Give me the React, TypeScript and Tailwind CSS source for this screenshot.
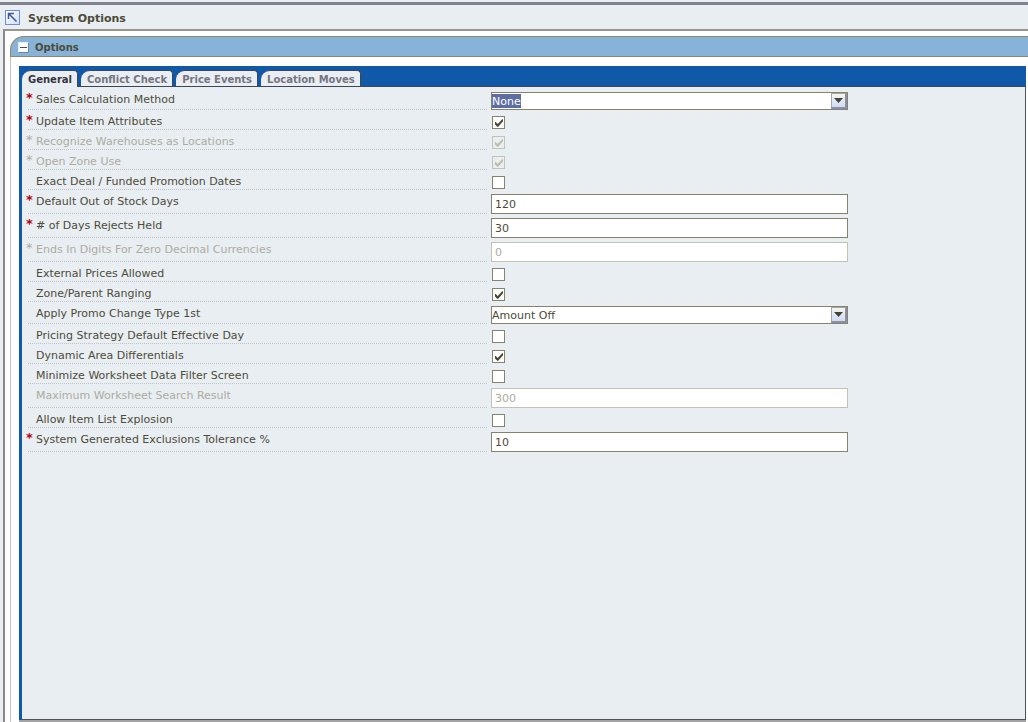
import React, { useState } from "react";

type Field = {
  id: string;
  label: string;
  kind: "select" | "check" | "text";
  value?: string;
  options?: string[];
  checked?: boolean;
  required?: boolean;
  disabled?: boolean;
  highlighted?: boolean;
};

const fields: Field[] = [
  { id: "sales-method", label: "Sales Calculation Method", kind: "select", value: "None", options: ["None"], required: true, highlighted: true },
  { id: "update-item", label: "Update Item Attributes", kind: "check", checked: true, required: true },
  { id: "warehouses", label: "Recognize Warehouses as Locations", kind: "check", checked: true, required: true, disabled: true },
  { id: "open-zone", label: "Open Zone Use", kind: "check", checked: true, required: true, disabled: true },
  { id: "exact-deal", label: "Exact Deal / Funded Promotion Dates", kind: "check" },
  { id: "out-of-stock", label: "Default Out of Stock Days", kind: "text", value: "120", required: true },
  { id: "rejects", label: "# of Days Rejects Held", kind: "text", value: "30", required: true },
  { id: "ends-in", label: "Ends In Digits For Zero Decimal Currencies", kind: "text", value: "0", required: true, disabled: true },
  { id: "external", label: "External Prices Allowed", kind: "check" },
  { id: "zone-parent", label: "Zone/Parent Ranging", kind: "check", checked: true },
  { id: "promo-type", label: "Apply Promo Change Type 1st", kind: "select", value: "Amount Off", options: ["Amount Off"] },
  { id: "strategy-day", label: "Pricing Strategy Default Effective Day", kind: "check" },
  { id: "area-diff", label: "Dynamic Area Differentials", kind: "check", checked: true },
  { id: "minimize", label: "Minimize Worksheet Data Filter Screen", kind: "check" },
  { id: "max-search", label: "Maximum Worksheet Search Result", kind: "text", value: "300", disabled: true },
  { id: "explosion", label: "Allow Item List Explosion", kind: "check" },
  { id: "tolerance", label: "System Generated Exclusions Tolerance %", kind: "text", value: "10", required: true },
];

const tabs = ["General", "Conflict Check", "Price Events", "Location Moves"];

const rowHeights = { select: "h-[22px]", check: "h-5", text: "h-6" };

function SelectControl({ field }: { field: Field }) {
  return (
    <div className="relative h-[18px] w-full">
      <select
        id={field.id}
        defaultValue={field.value}
        className={
          "block h-full w-full appearance-none border border-[#85836a] bg-white text-[11px] leading-[18px] outline-none " +
          (field.highlighted
            ? "bg-[linear-gradient(#5d6ea3,#5d6ea3)] bg-[length:29px_14px] bg-[position:0_1px] bg-no-repeat text-white"
            : "text-[#4c4b38]")
        }
      >
        {field.options?.map((o) => (
          <option key={o}>{o}</option>
        ))}
      </select>
      <span className="pointer-events-none absolute top-px right-px flex h-4 w-4 items-center justify-center border border-r-2 border-b-2 border-[#a9a89a] border-r-[#8c8fa8] border-b-[#8c8fa8] bg-linear-to-b from-[#f4f5f0] to-[#cddcf7]">
        <svg width="9" height="5" viewBox="0 0 9 5" aria-hidden="true">
          <path d="M0 0h9L4.500 5z" fill="#45422f" />
        </svg>
      </span>
    </div>
  );
}

function CheckControl({ field }: { field: Field }) {
  const [on, setOn] = useState(!!field.checked);
  return (
    <span className="relative ml-px block h-[13px] w-[13px]">
      <input
        id={field.id}
        type="checkbox"
        checked={on}
        disabled={field.disabled}
        onChange={() => setOn(!on)}
        className="block h-full w-full appearance-none border border-[#85836a] bg-white disabled:border-[#c3c3b4] disabled:bg-[#eaeef2]"
      />
      {on && (
        <svg className="pointer-events-none absolute inset-0" width="13" height="13" viewBox="0 0 13 13" aria-hidden="true">
          <path d="M3 6v2.500l2.200 2.200h1L11 5.200V3.300h-.8L5.700 8 3.700 6z" fill={field.disabled ? "#bdbdae" : "#4a4736"} />
        </svg>
      )}
    </span>
  );
}

function Row({ field }: { field: Field }) {
  return (
    <div className={"grid grid-cols-[459fr_357fr_173fr] gap-x-1 " + rowHeights[field.kind]}>
      <div className={"mb-0.5 flex border-b border-dotted border-[#bfc3c6] " + (field.disabled ? "text-[#acac9e]" : "text-[#4c4b38]")}>
        <span className={"-ml-0.5 w-2.5 text-[13px] leading-4 " + (field.disabled ? "" : "font-bold text-[#b00010]")}>
          {field.required ? "*" : ""}
        </span>
        <label htmlFor={field.id} className="h-4 leading-5 whitespace-nowrap">
          {field.label}
        </label>
      </div>
      <div className="flex items-center">
        {field.kind === "select" && <SelectControl field={field} />}
        {field.kind === "check" && <CheckControl field={field} />}
        {field.kind === "text" && (
          <input
            id={field.id}
            type="text"
            defaultValue={field.value}
            disabled={field.disabled}
            className="h-5 w-full border border-[#85836a] bg-white px-[3px] text-[11px] text-[#4c4b38] outline-none disabled:border-[#c3c3b4] disabled:text-[#acac9e]"
          />
        )}
      </div>
    </div>
  );
}

export default function App() {
  const [active, setActive] = useState(0);
  return (
    <div className="flex min-h-screen flex-col bg-[#e9eef3] pt-0.5 font-['DejaVu_Sans',Verdana,sans-serif] text-[11px] text-[#4c4b38]">
      <header className="flex h-[27px] items-center gap-2 border-t-3 border-[#82828f] pt-1 pl-[5px]">
        <button type="button" aria-label="Restore" className="-mt-1 h-[15px] w-[15px] border border-[#6e8ed0] bg-linear-to-br from-white to-[#cfdefa]">
          <svg width="13" height="13" viewBox="0 0 13 13" fill="none" stroke="#3c5796" aria-hidden="true">
            <path d="M2.500 8V2.500H8M3 3l7.500 7.500" strokeWidth="1.500" />
          </svg>
        </button>
        <h1 className="text-[11px] font-bold">System Options</h1>
      </header>

      <main className="ml-[3px] flex grow flex-col border-t-2 border-l-2 border-t-[#96968a] border-l-[#8a8689] bg-white pt-[5px] pl-[5px]">
        <section className="flex grow flex-col">
          <div className="flex h-[21px] items-center gap-1.5 rounded-tl-[14px] border border-r-0 border-[#8d8a62] bg-[#87b3d8] pt-0.5 pl-[7px]">
            <button type="button" aria-label="Collapse Options" className="h-[11px] w-[11px] rounded-[1px] border border-[#e4eefa] border-r-[#6686b0] border-b-[#6686b0] bg-white">
              <svg width="9" height="9" viewBox="0 0 9 9" aria-hidden="true">
                <path d="M1 4h7v1H1z" fill="#3f4a60" />
              </svg>
            </button>
            <h2 className="text-[10px] font-bold">Options</h2>
          </div>

          <div className="flex grow flex-col border-l border-[#c2c2c2] pt-[9px] pr-0.5 pl-2">
            <div className="flex grow flex-col bg-[#1058a8] pl-[3px]">
              <div role="tablist" className="flex h-[21px] items-end gap-[3px] border-b border-[#3d4556]">
                {tabs.map((t, i) => (
                  <button
                    key={t}
                    type="button"
                    role="tab"
                    aria-selected={i === active}
                    onClick={() => setActive(i)}
                    className={
                      "rounded-tl-[9px] rounded-tr-[4px] border-t border-r border-[#3d4556] bg-[#e9eef3] pr-[5px] pl-1.5 text-[10px] leading-[18px] font-bold whitespace-nowrap " +
                      (i === active ? "-mb-px h-[17px] text-[#35343f]" : "h-4 text-[#74757f]")
                    }
                  >
                    {t}
                  </button>
                ))}
              </div>
              <div role="tabpanel" className="grow border-r border-b border-[#4d5057] bg-[#e9eef3] pt-[3px] pl-1.5">
                {fields.map((f) => (
                  <Row key={f.id} field={f} />
                ))}
              </div>
            </div>
            <div className="h-0.5 bg-[#a3a3a3]" />
          </div>
        </section>
      </main>
    </div>
  );
}
